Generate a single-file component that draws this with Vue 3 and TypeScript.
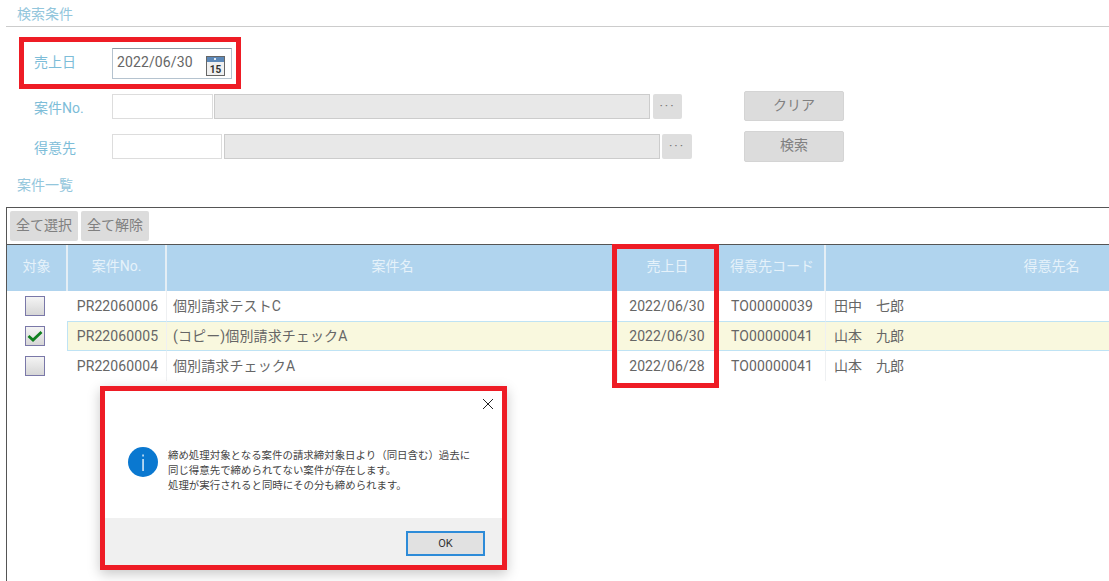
<script setup lang="ts">
interface Row { no: string; name: string; date: string; code: string; client: string; checked: boolean }
const rows: Row[] = [
  { no: 'PR22060006', name: '個別請求テストC', date: '2022/06/30', code: 'TO00000039', client: '田中　七郎', checked: false },
  { no: 'PR22060005', name: '(コピー)個別請求チェックA', date: '2022/06/30', code: 'TO00000041', client: '山本　九郎', checked: true },
  { no: 'PR22060004', name: '個別請求チェックA', date: '2022/06/28', code: 'TO00000041', client: '山本　九郎', checked: false },
]
</script>

<template>
  <div class="page">
    <div class="section-title first">検索条件</div>
    <div class="form">
      <div class="form-row date-row">
        <span class="label date-label">売上日</span>
        <div class="date-input">
          <span class="date-text">2022/06/30</span>
          <svg class="cal" width="19" height="20" viewBox="0 0 19 20">
            <rect x="0.5" y="0.5" width="18" height="19" fill="#f0f0f0" stroke="#666" />
            <rect x="1" y="1" width="17" height="5" fill="#5c88b8" />
            <rect x="8" y="2" width="2" height="2" fill="#dfe8f2" />
            <text x="9.5" y="17" text-anchor="middle" class="cal-num">15</text>
          </svg>
        </div>
      </div>
      <div class="form-row row-no">
        <span class="label">案件No.</span>
        <div class="input w-no"></div>
        <div class="ro w-ro"></div>
        <div class="dots">···</div>
        <div class="btn clear">クリア</div>
      </div>
      <div class="form-row row-client">
        <span class="label">得意先</span>
        <div class="input w-client"></div>
        <div class="ro w-ro"></div>
        <div class="dots">···</div>
        <div class="btn search">検索</div>
      </div>
    </div>
    <div class="section-title second">案件一覧</div>
    <div class="panel">
      <div class="toolbar">
        <div class="tool">全て選択</div>
        <div class="tool">全て解除</div>
      </div>
      <div class="grid head">
        <div>対象</div><div>案件No.</div><div>案件名</div><div>売上日</div><div>得意先コード</div><div class="client-head">得意先名</div>
      </div>
      <div v-for="r in rows" :key="r.no" class="grid body" :class="{ on: r.checked }">
        <div class="cell-check">
          <span class="check">
            <svg v-if="r.checked" width="18" height="18" viewBox="0 0 18 18">
              <path d="M2.5 9 L7 13 L15.5 5" fill="none" stroke="#0f7f1f" stroke-width="2.8" />
            </svg>
          </span>
        </div>
        <div class="cell line no">{{ r.no }}</div>
        <div class="cell line left">{{ r.name }}</div>
        <div class="cell line">{{ r.date }}</div>
        <div class="cell line code">{{ r.code }}</div>
        <div class="cell left client">{{ r.client }}</div>
      </div>
    </div>

    <div class="mark mark-date"></div>
    <div class="mark mark-col"></div>

    <div class="dialog">
      <svg class="close" width="12" height="12" viewBox="0 0 12 12">
        <path d="M1 1 L11 11 M11 1 L1 11" stroke="#222" stroke-width="1" />
      </svg>
      <div class="dialog-body">
        <svg class="info" width="30" height="30" viewBox="0 0 30 30">
          <circle cx="15" cy="15" r="15" fill="#0a78d0" />
          <rect x="14.4" y="12" width="1.3" height="12" fill="#fff" />
          <rect x="14.4" y="7.5" width="1.3" height="2" fill="#fff" />
        </svg>
        <p>締め処理対象となる案件の請求締対象日より（同日含む）過去に<br />同じ得意先で締められてない案件が存在します。<br />処理が実行されると同時にその分も締められます。</p>
      </div>
      <div class="dialog-foot"><div class="ok">OK</div></div>
    </div>
  </div>
</template>

<style>
html, body { margin: 0; overflow: hidden; background: #fff; }
</style>

<style scoped>
.page {
  position: relative;
  width: 1109px;
  height: 581px;
  overflow: hidden;
  font-family: Roboto, "Noto Sans CJK JP", sans-serif;
  font-size: 14px;
  color: #666;
  box-sizing: border-box;
  padding-left: 6px;
}
.section-title {
  color: #93c6dc;
  font-size: 14px;
  line-height: 18px;
  padding-left: 11px;
}
.first {
  padding-top: 6px;
  box-sizing: border-box;
  border-bottom: 1px solid #ccc;
  line-height: 17px;
  height: 27px;
}
.second { height: 31px; line-height: 18px; }
.form { padding: 21px 0 0 28px; height: 149px; box-sizing: border-box; }
.form-row { display: flex; align-items: center; }
.label { width: 78px; color: #7dbdd8; flex: none; }
.date-label { margin-top: -5px; }
.date-row { height: 31px; }
.date-input {
  width: 120px;
  height: 31px;
  box-sizing: border-box;
  border: 1px solid #b5c3cf;
  border-top-color: #8d99a5;
  padding-left: 4px;
  display: flex;
  align-items: center;
  justify-content: space-between;
  padding-right: 6px;
  color: #666;
}
.date-text { margin-top: -3px; letter-spacing: 0.12px; }
.cal { margin-top: 4px; }
.cal-num { font-size: 10px; font-weight: 700; fill: #333; }
.row-no { height: 25px; margin-top: 15px; }
.row-client { height: 25px; margin-top: 15px; }
.input {
  height: 25px;
  box-sizing: border-box;
  border: 1px solid #ddd;
  background: #fff;
  flex: none;
}
.w-no { width: 101px; }
.w-client { width: 110px; margin-right: 1px; }
.ro {
  height: 25px;
  box-sizing: border-box;
  border: 1px solid #ccc;
  background: #e8e8e8;
  margin-left: 1px;
  flex: none;
}
.w-ro { width: 436px; }
.dots {
  width: 29px;
  height: 25px;
  margin-left: 3px;
  background: #dedede;
  border-radius: 2px;
  text-align: center;
  line-height: 24px;
  color: #777;
  font-size: 13px;
  letter-spacing: 2px;
  flex: none;
}
.row-client .dots { margin-left: 2px; width: 30px; }
.btn {
  width: 100px;
  height: 30px;
  background: #dcdcdc;
  border: 1px solid #d4d4d4;
  box-sizing: border-box;
  border-radius: 2px;
  text-align: center;
  line-height: 26px;
  color: #808080;
  flex: none;
}
.clear { margin-left: 62px; margin-top: -1px; }
.search { margin-left: 52px; height: 31px; }
.panel {
  border-left: 1px solid #555;
  border-top: 1px solid #555;
  height: 374px;
  box-sizing: border-box;
}
.toolbar {
  display: flex;
  gap: 3px;
  padding: 3px 0 0 3px;
  height: 37px;
  box-sizing: border-box;
  border-bottom: 1px solid #555;
}
.tool {
  width: 68px;
  height: 30px;
  background: #dcdcdc;
  border-radius: 2px;
  text-align: center;
  line-height: 28px;
  color: #808080;
}
.grid {
  display: grid;
  grid-template-columns: 61px 99px 451px 99px 109px 1fr;
}
.head {
  height: 46px;
  background: #b0d4ee;
  color: #e6f2fa;
  text-align: center;
  line-height: 42px;
}
.head > div { border-right: 2px solid #e4eef5; box-sizing: border-box; }
.head > div:nth-child(3) { border-right: 0; }
.head > div:nth-child(4) { padding-left: 2px; }
.head > div:nth-child(5) { padding-left: 3px; }
.head > div:last-child { border-right: 0; }
.client-head { padding-left: 168px; }
.body { height: 30px; line-height: 30px; box-sizing: border-box; width: 1102px; letter-spacing: 0.12px; }
.cell { text-align: center; height: 30px; overflow: hidden; white-space: nowrap; box-sizing: border-box; }
.line { border-right: 1px solid #eef0f2; }
.no { padding-left: 1px; }
.code { padding-left: 2px; }
.left { text-align: left; padding-left: 6px; }
.client { padding-left: 8px; letter-spacing: 0; }
.cell-check { display: flex; align-items: center; justify-content: center; padding-right: 6px; }
.check {
  width: 20px;
  height: 20px;
  box-sizing: border-box;
  border: 1px solid #7a78a8;
  background: linear-gradient(#f4f4f4, #d6d6d6);
  display: block;
  flex: none;
}
.check svg { display: block; }
.on .cell {
  background: #f9f8de;
  border-top: 1px solid #bfe3f4;
  border-bottom: 1px solid #bfe3f4;
  line-height: 28px;
}
.on .cell:nth-child(2) {
  box-shadow: -1px 0 0 #bfe3f4;
}
.mark { position: absolute; border: 5px solid #ee1c25; box-sizing: border-box; pointer-events: none; }
.mark-date { left: 19px; top: 37px; width: 222px; height: 52px; }
.mark-col { left: 612px; top: 244px; width: 107px; height: 144px; }
.dialog {
  position: absolute;
  left: 100px;
  top: 386px;
  width: 407px;
  height: 184px;
  box-sizing: border-box;
  border: 5px solid #ee1c25;
  background: #fff;
  box-shadow: 0 4px 12px rgba(0, 0, 0, 0.22);
  display: flex;
  flex-direction: column;
}
.close { position: absolute; right: 8px; top: 7px; }
.dialog-body {
  flex: 1;
  display: flex;
  align-items: flex-start;
  padding: 56px 0 0 23px;
  gap: 10px;
  box-sizing: border-box;
}
.info { flex: none; }
.dialog-body p {
  margin: 0;
  padding-top: 1px;
  font-size: 10.45px;
  line-height: 15px;
  color: #444;
  white-space: nowrap;
}
.dialog-foot {
  height: 47px;
  background: #f0f0f0;
  display: flex;
  justify-content: flex-end;
  padding: 13px 17px 0 0;
  box-sizing: border-box;
}
.ok {
  width: 79px;
  height: 25px;
  box-sizing: border-box;
  border: 2px solid #2d8bd8;
  background: #e1e1e1;
  color: #333;
  font-size: 11px;
  text-align: center;
  line-height: 21px;
}
</style>
